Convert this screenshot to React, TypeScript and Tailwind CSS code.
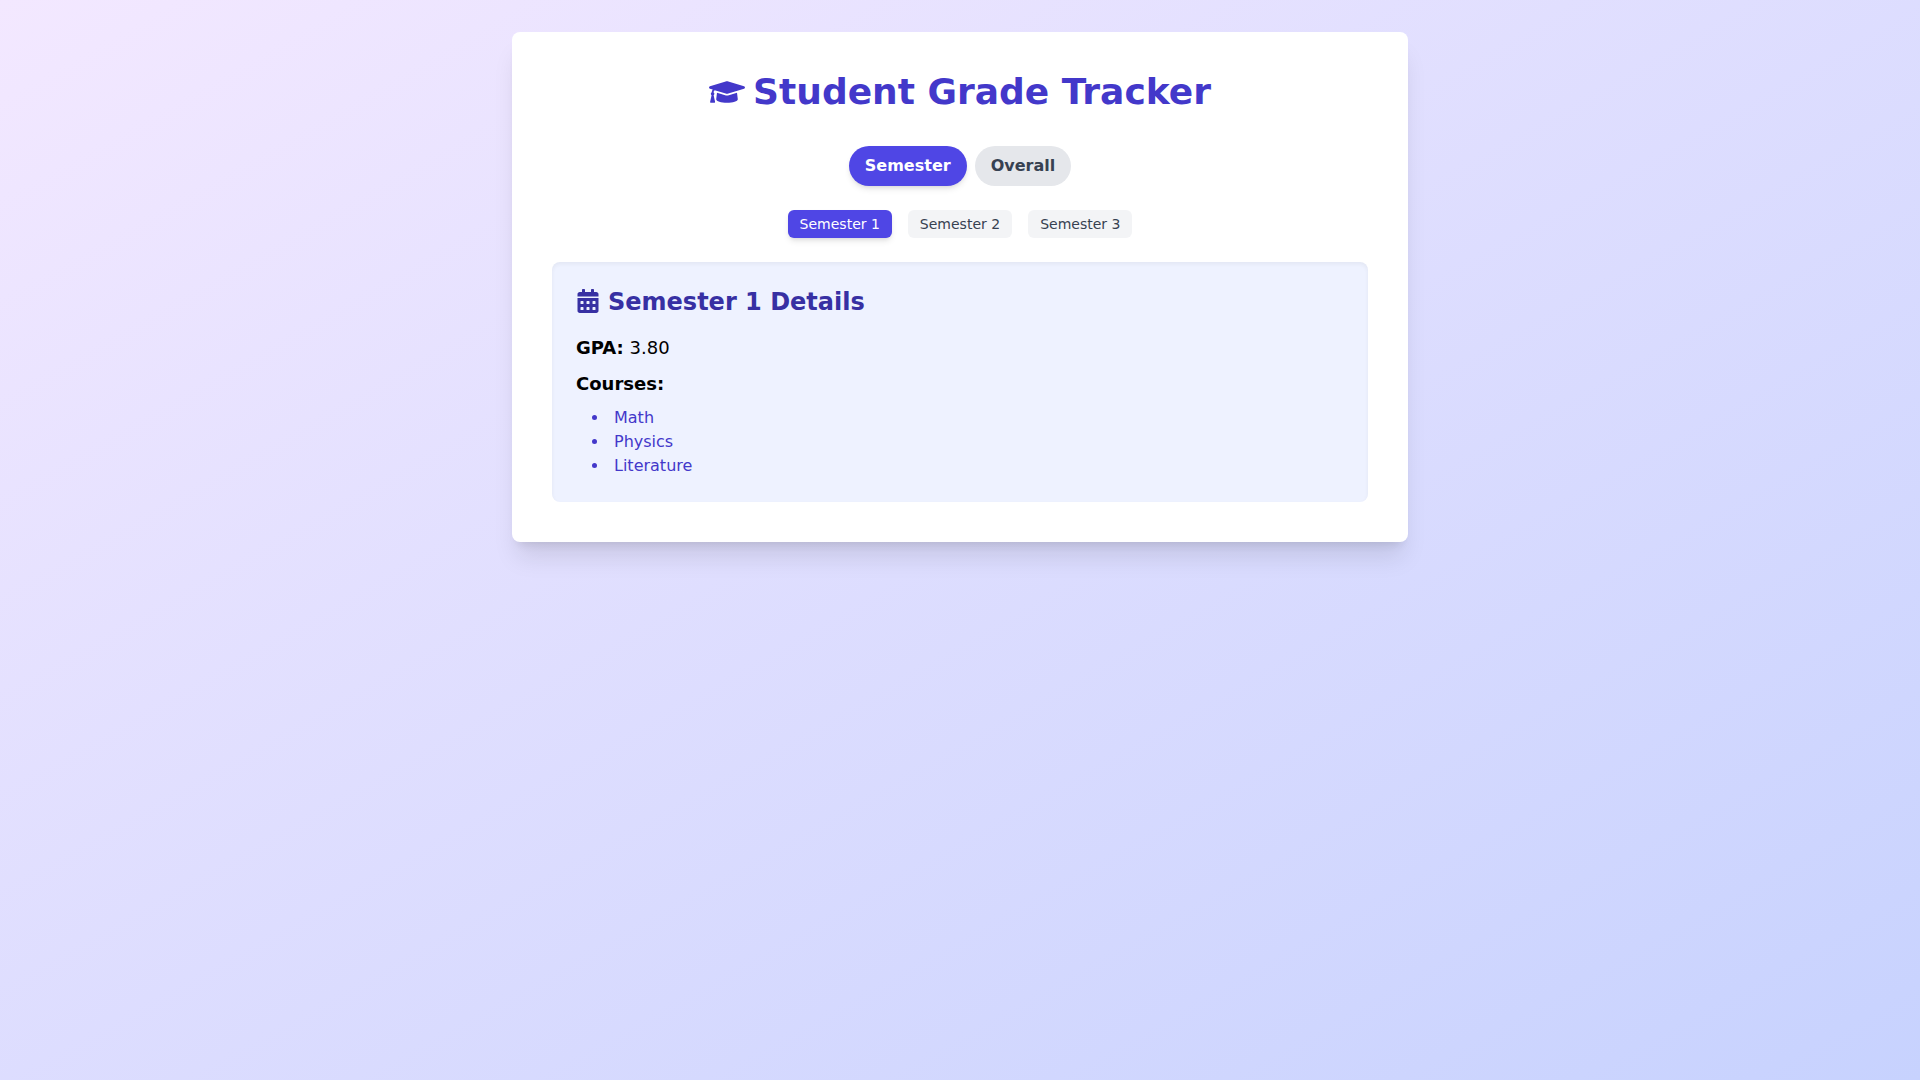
import { useState } from "react";
import { FaCalendarAlt, FaGraduationCap } from "react-icons/fa";

interface Semester {
  id: number;
  name: string;
  gpa: number;
  courses: string[];
}

const semesters: Semester[] = [
  { id: 1, name: "Semester 1", gpa: 3.8, courses: ["Math", "Physics", "Literature"] },
  { id: 2, name: "Semester 2", gpa: 3.6, courses: ["Chemistry", "Biology", "History"] },
  { id: 3, name: "Semester 3", gpa: 3.9, courses: ["Computer Science", "Statistics", "Art"] },
];

type View = "semester" | "overall";

function ViewButton({ label, active, onClick }: { label: string; active: boolean; onClick: () => void }) {
  return (
    <button
      onClick={onClick}
      className={`px-4 py-2 rounded-full font-semibold ${
        active ? "bg-[#4f46e5] text-white shadow-md" : "bg-[#e5e7eb] text-[#374151]"
      }`}
    >
      {label}
    </button>
  );
}

export default function App() {
  const [view, setView] = useState<View>("semester");
  const [selectedId, setSelectedId] = useState(1);

  const selected = semesters.find((s) => s.id === selectedId) ?? semesters[0];
  const overallGpa = semesters.reduce((sum, s) => sum + s.gpa, 0) / semesters.length;

  return (
    <div className="min-h-screen bg-[linear-gradient(to_bottom_right,#f3e8ff,#c7d2fe)] p-8 font-['DejaVu_Sans',sans-serif] text-black">
      <main className="max-w-4xl mx-auto bg-white rounded-lg shadow-xl p-10">
        <h1 className="mb-8 text-center text-4xl font-bold text-[#4338ca]">
          <FaGraduationCap className="inline-block mr-2 mb-1" />
          Student Grade Tracker
        </h1>

        <div className="flex justify-center gap-2 mb-6">
          <ViewButton label="Semester" active={view === "semester"} onClick={() => setView("semester")} />
          <ViewButton label="Overall" active={view === "overall"} onClick={() => setView("overall")} />
        </div>

        {view === "semester" ? (
          <>
            <div className="flex justify-center gap-4 mb-6">
              {semesters.map((s) => (
                <button
                  key={s.id}
                  onClick={() => setSelectedId(s.id)}
                  className={`px-3 py-1 rounded-md text-sm ${
                    s.id === selectedId ? "bg-[#4f46e5] text-white shadow-md" : "bg-[#f3f4f6] text-[#374151]"
                  }`}
                >
                  {s.name}
                </button>
              ))}
            </div>

            <section className="bg-[#eef2ff] rounded-lg shadow-inner p-6">
              <h2 className="mb-4 text-2xl font-semibold text-[#3730a3]">
                <FaCalendarAlt className="inline-block mr-2 mb-1" />
                {selected.name} Details
              </h2>
              <p className="mb-2 text-lg">
                <strong>GPA:</strong> {selected.gpa.toFixed(2)}
              </p>
              <p className="mb-2 text-lg">
                <strong>Courses:</strong>
              </p>
              <ul className="list-disc list-inside ml-4 text-[#4338ca]">
                {selected.courses.map((course) => (
                  <li key={course}>{course}</li>
                ))}
              </ul>
            </section>
          </>
        ) : (
          <section className="bg-[#eef2ff] rounded-lg shadow-inner p-6">
            <h2 className="mb-4 text-2xl font-semibold text-[#3730a3]">Overall Performance</h2>
            <p className="text-lg">
              <strong>GPA:</strong> {overallGpa.toFixed(2)}
            </p>
          </section>
        )}
      </main>
    </div>
  );
}
